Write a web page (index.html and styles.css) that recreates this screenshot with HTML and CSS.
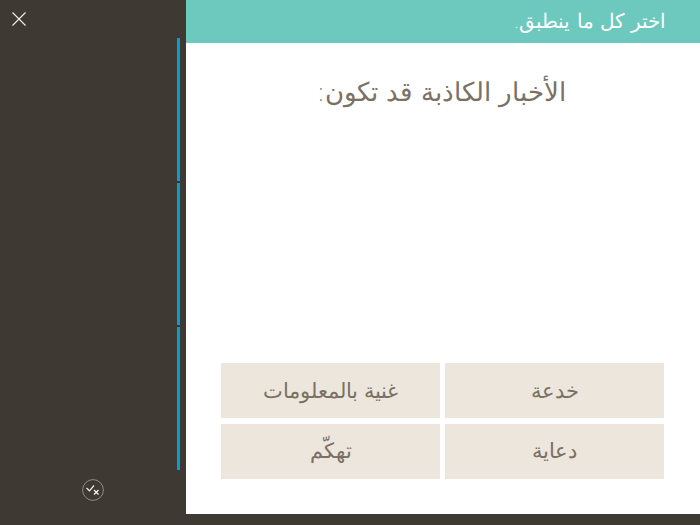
FILE: index.html
```html
<!DOCTYPE html>
<html lang="ar">
<head>
    <meta charset="utf-8">
    <title>Quiz</title>
    <link rel="stylesheet" href="styles.css">
</head>
<body>
    <div class="sidebar">
        <svg class="close-icon" width="16" height="16" viewBox="0 0 16 16">
            <path d="M1.5 1.5 L14.5 14.5 M14.5 1.5 L1.5 14.5" stroke="#eeeae4" stroke-width="1.2" fill="none"/>
        </svg>
        <div class="progress">
            <div class="progress-part"></div>
            <div class="progress-part"></div>
            <div class="progress-part"></div>
        </div>
        <svg class="check-icon" width="22" height="22" viewBox="0 0 22 22">
            <circle cx="11" cy="11" r="10.4" stroke="#8f8b85" stroke-width="1" fill="none"/>
            <path d="M4.5 9 L7.5 11.8 L12 6.5" stroke="#f2f0ec" stroke-width="1.2" fill="none"/>
            <path d="M12 11 L16.5 15.5 M16.5 11 L12 15.5" stroke="#f2f0ec" stroke-width="1.4" fill="none"/>
        </svg>
    </div>
    <div class="main" dir="rtl">
        <div class="header">اختر كل ما ينطبق.</div>
        <div class="question">الأخبار الكاذبة قد تكون:</div>
        <div class="answers">
            <div class="answer">خدعة</div>
            <div class="answer">غنية بالمعلومات</div>
            <div class="answer">دعاية</div>
            <div class="answer">تهكّم</div>
        </div>
    </div>
</body>
</html>
```

FILE: styles.css
```css
html, body {
    height: 100%;
}

body {
    margin: 0;
    display: flex;
    align-items: flex-start;
    background: #3e3932;
    font-family: "DejaVu Sans", sans-serif;
    font-weight: 200;
    overflow: hidden;
}

.sidebar {
    position: relative;
    width: 186px;
    height: 525px;
    flex-shrink: 0;
}

.close-icon {
    position: absolute;
    top: 11px;
    left: 11px;
}

.check-icon {
    position: absolute;
    top: 479px;
    left: 82px;
}

.progress {
    position: absolute;
    top: 38px;
    left: 177px;
    width: 3px;
    height: 432px;
    display: flex;
    flex-direction: column;
    gap: 2px;
}

.progress-part {
    flex: 1;
    background: #0b9bd3;
}

.main {
    width: 514px;
    height: 514px;
    background: #fff;
    display: flex;
    flex-direction: column;
}

.header {
    height: 43px;
    line-height: 43px;
    padding: 0 34px;
    background: #6dc8bd;
    color: #fff;
    font-size: 19.5px;
}

.question {
    padding: 27px 134px 0 0;
    color: #7a7064;
    font-size: 26px;
    line-height: 44px;
    flex: 1;
}

.answers {
    display: grid;
    grid-template-columns: 219px 219px;
    grid-auto-rows: 55.3px;
    gap: 5.4px 5px;
    padding: 0 36px 35px 35px;
}

.answer {
    display: flex;
    align-items: center;
    justify-content: center;
    background: #ede6dd;
    color: #7a7064;
    font-size: 20.5px;
}
```
